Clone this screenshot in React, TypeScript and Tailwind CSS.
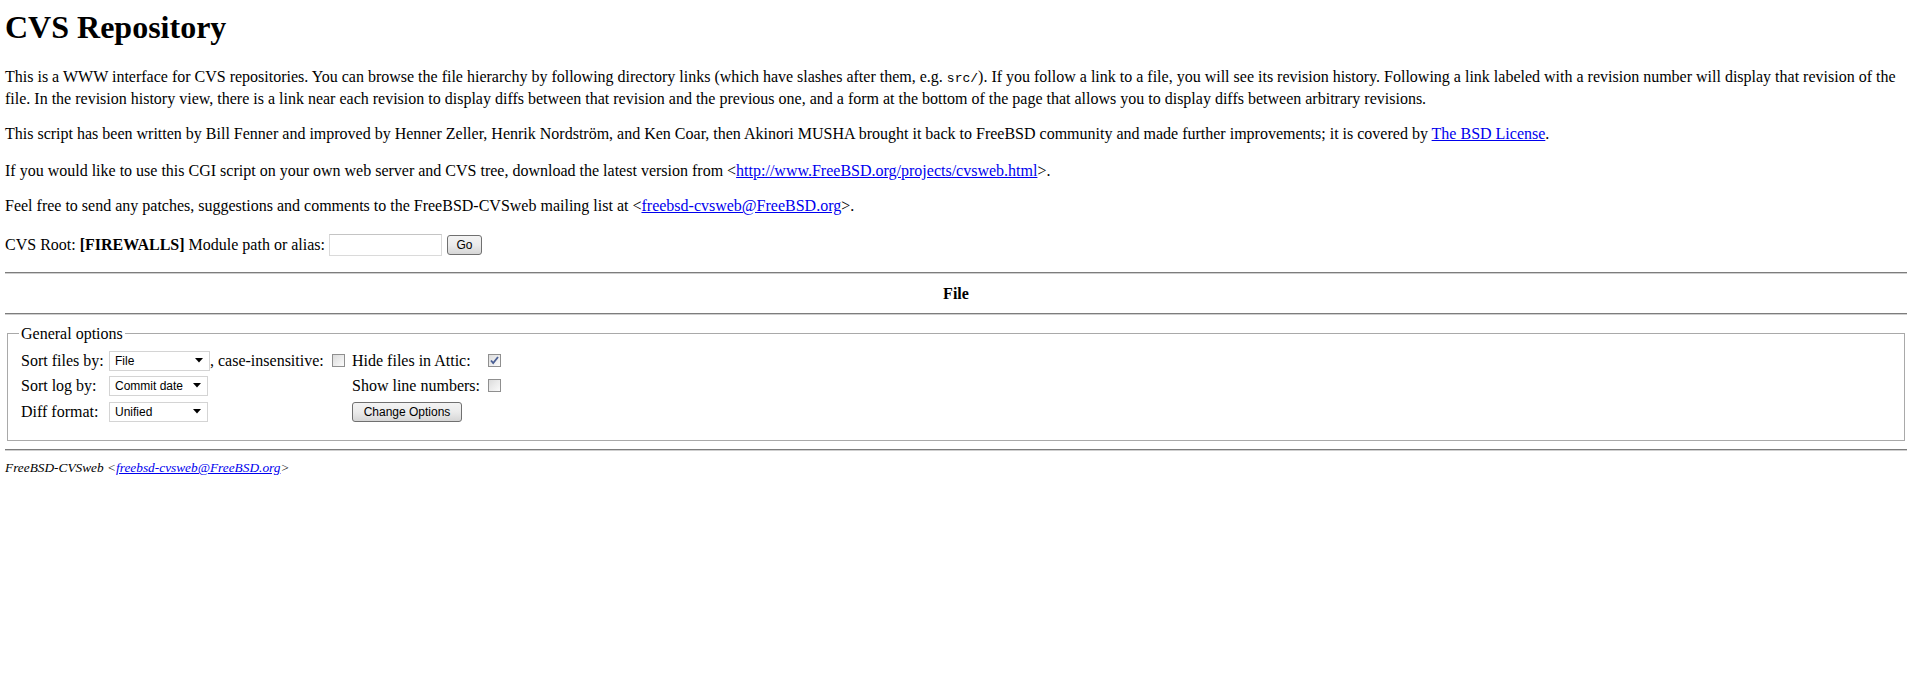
import React from "react";

const serif = "font-['Liberation_Serif','Times_New_Roman',serif]";
const sans = "font-['Liberation_Sans',Arial,sans-serif]";

function Select({ value, width }: { value: string; width: string }) {
  return (
    <div
      className={`${width} h-[20px] flex items-center justify-between border border-[#d4d4d4] bg-white pl-[5px] pr-[6px] text-[12px] text-black ${sans}`}
    >
      <span>{value}</span>
      <svg width="8" height="5" viewBox="0 0 8 5">
        <path d="M0 0h8L4 4.5z" fill="#000" />
      </svg>
    </div>
  );
}

function Checkbox({ checked = false }: { checked?: boolean }) {
  return (
    <span className="inline-flex items-center justify-center w-[13px] h-[13px] border border-[#8f8f8f] bg-gradient-to-br from-[#dcdcdc] to-[#fbfbfb]">
      {checked && (
        <svg width="9" height="9" viewBox="0 0 9 9">
          <path d="M1 4.5l2.2 2.6L8 1" fill="none" stroke="#4a5f94" strokeWidth="1.8" />
        </svg>
      )}
    </span>
  );
}

function Button({ label, width }: { label: string; width: string }) {
  return (
    <button
      className={`${width} h-[20px] rounded-[3px] border border-[#707070] bg-gradient-to-b from-[#f3f3f3] via-[#ebebeb] to-[#d6d6d6] text-[12px] text-black ${sans}`}
    >
      {label}
    </button>
  );
}

function Rule() {
  return <div className="h-[2px] border-t border-[#7d7d7d] border-b border-b-[#cfcfcf]" />;
}

export default function App() {
  const link = "text-[#0000ee] underline";
  return (
    <div className={`min-h-screen bg-white text-black pl-[5px] pr-[8px] pt-[9px] text-[16px] ${serif}`}>
      <h1 className="text-[32px] leading-[37px] font-bold mb-[21px]">CVS Repository</h1>

      <p className="leading-[20px] mb-[15px]">
        This is a WWW interface for CVS repositories. You can browse the file hierarchy by following directory
        links (which have slashes after them, e.g.{" "}
        <code className="font-['Liberation_Mono','Courier_New',monospace] text-[13px] leading-[20px]">src/</code>). If
        you follow a link to a file, you will see its revision history. Following a link labeled with a revision number
        will display that revision of the file. In the revision history view, there is a link near each revision to
        display diffs between that revision and the previous one, and a form at the bottom of the page that allows you
        to display diffs between arbitrary revisions.
      </p>

      <p className="leading-[20px] mb-[17px]">
        This script has been written by Bill Fenner and improved by Henner Zeller, Henrik Nordström, and Ken Coar,
        then Akinori MUSHA brought it back to FreeBSD community and made further improvements; it is covered by{" "}
        <a className={link}>The BSD License</a>.
      </p>

      <p className="leading-[20px] mb-[15px]">
        If you would like to use this CGI script on your own web server and CVS tree, download the latest version from
        &lt;<a className={link}>http://www.FreeBSD.org/projects/cvsweb.html</a>&gt;.
      </p>

      <p className="leading-[20px] mb-[16px]">
        Feel free to send any patches, suggestions and comments to the FreeBSD-CVSweb mailing list at &lt;
        <a className={link}>freebsd-cvsweb@FreeBSD.org</a>&gt;.
      </p>

      <div className="h-[26px] flex items-center">
        <span>
          CVS Root: <b>[FIREWALLS]</b> Module path or alias:
        </span>
        <input className="ml-[4px] w-[113px] h-[22px] border border-[#dadada] border-t-[#c4c4c4] bg-white" />
        <span className="ml-[5px] inline-flex">
          <Button label="Go" width="w-[35px]" />
        </span>
      </div>

      <div className="mt-[14px]">
        <Rule />
      </div>
      <div className="h-[39px] flex items-center justify-center font-bold">File</div>
      <Rule />

      <fieldset className="mt-[9px] mx-[2px] border border-[#a9a9a9] pl-[13px] pr-[10px] pt-[5px] pb-[15px]">
        <legend className="-ml-[2px] px-[2px] leading-[19px]">General options</legend>
        <div className="grid grid-cols-[88px_243px_136px_auto] items-center">
          <div className="h-[25px] flex items-center">Sort files by:</div>
          <div className="flex items-center">
            <Select value="File" width="w-[101px]" />
            <span className="mr-[8px]">, case-insensitive:</span>
            <Checkbox />
          </div>
          <div>Hide files in Attic:</div>
          <div className="flex items-center">
            <Checkbox checked />
          </div>

          <div className="h-[25px] flex items-center">Sort log by:</div>
          <div className="flex items-center">
            <Select value="Commit date" width="w-[99px]" />
          </div>
          <div>Show line numbers:</div>
          <div className="flex items-center">
            <Checkbox />
          </div>

          <div className="h-[27px] flex items-center">Diff format:</div>
          <div className="flex items-center">
            <Select value="Unified" width="w-[99px]" />
          </div>
          <div className="flex items-center">
            <Button label="Change Options" width="w-[110px]" />
          </div>
          <div />
        </div>
      </fieldset>

      <div className="mt-[8px]">
        <Rule />
      </div>
      <address className="mt-[7px] text-[13.33px] italic">
        FreeBSD-CVSweb &lt;<a className={link}>freebsd-cvsweb@FreeBSD.org</a>&gt;
      </address>
    </div>
  );
}
